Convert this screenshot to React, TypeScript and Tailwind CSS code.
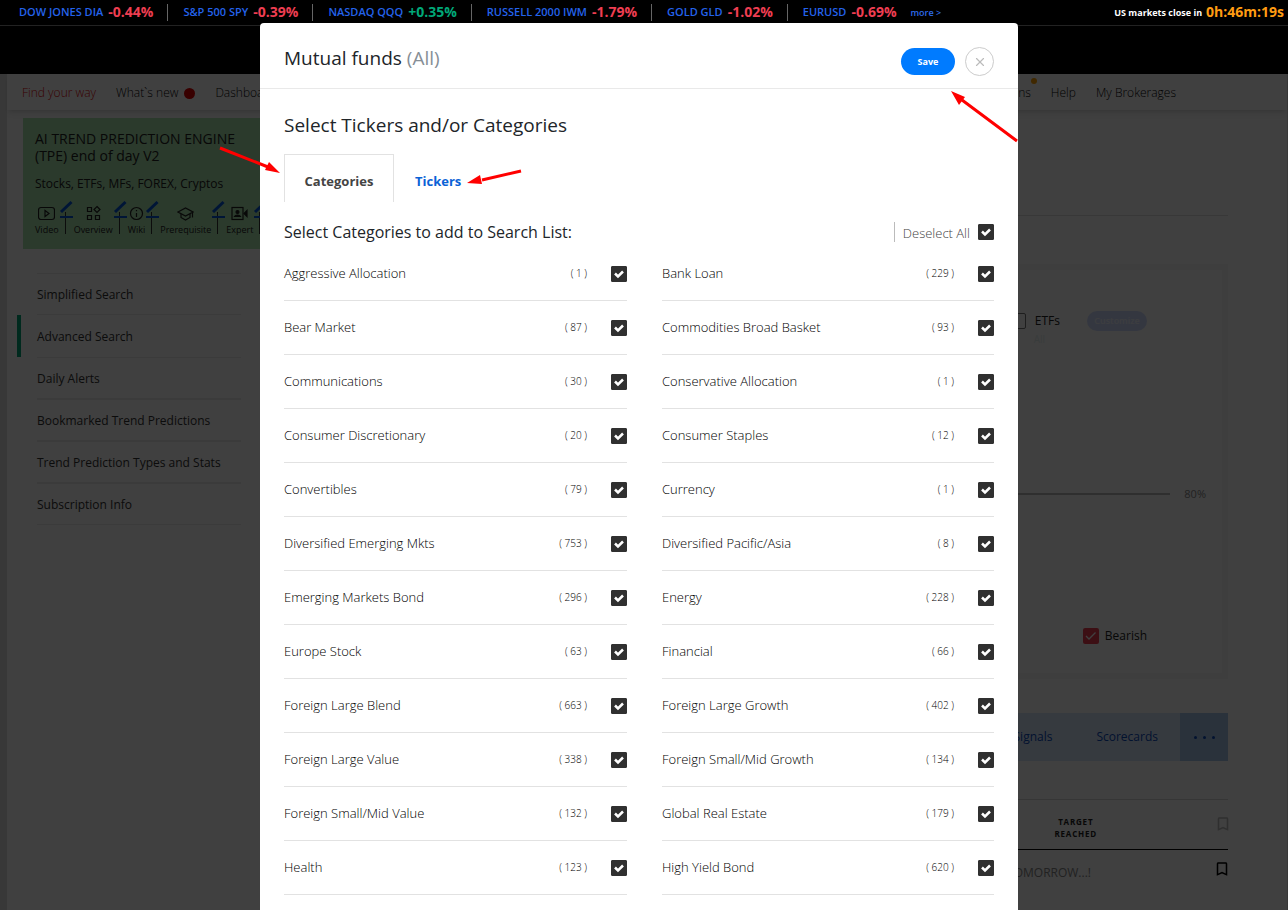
import { X } from 'lucide-react'
import { MdBookmarkBorder } from 'react-icons/md'

const quotes = [
  { name: 'DOW JONES DIA', change: '-0.44%' },
  { name: 'S&P 500 SPY', change: '-0.39%' },
  { name: 'NASDAQ QQQ', change: '+0.35%' },
  { name: 'RUSSELL 2000 IWM', change: '-1.79%' },
  { name: 'GOLD GLD', change: '-1.02%' },
  { name: 'EURUSD', change: '-0.69%' },
]

const categories = [
  [
    { name: 'Aggressive Allocation', count: 1 },
    { name: 'Bear Market', count: 87 },
    { name: 'Communications', count: 30 },
    { name: 'Consumer Discretionary', count: 20 },
    { name: 'Convertibles', count: 79 },
    { name: 'Diversified Emerging Mkts', count: 753 },
    { name: 'Emerging Markets Bond', count: 296 },
    { name: 'Europe Stock', count: 63 },
    { name: 'Foreign Large Blend', count: 663 },
    { name: 'Foreign Large Value', count: 338 },
    { name: 'Foreign Small/Mid Value', count: 132 },
    { name: 'Health', count: 123 },
  ],
  [
    { name: 'Bank Loan', count: 229 },
    { name: 'Commodities Broad Basket', count: 93 },
    { name: 'Conservative Allocation', count: 1 },
    { name: 'Consumer Staples', count: 12 },
    { name: 'Currency', count: 1 },
    { name: 'Diversified Pacific/Asia', count: 8 },
    { name: 'Energy', count: 228 },
    { name: 'Financial', count: 66 },
    { name: 'Foreign Large Growth', count: 402 },
    { name: 'Foreign Small/Mid Growth', count: 134 },
    { name: 'Global Real Estate', count: 179 },
    { name: 'High Yield Bond', count: 620 },
  ],
]

const menu = [
  'Simplified Search',
  'Advanced Search',
  'Daily Alerts',
  'Bookmarked Trend Predictions',
  'Trend Prediction Types and Stats',
  'Subscription Info',
]

const guides = [
  {
    label: 'Video',
    icon: (
      <>
        <rect x="0.5" y="2.5" width="16" height="12" rx="2.5" />
        <path d="M7 5.5v6l4-3z" />
      </>
    ),
  },
  {
    label: 'Overview',
    icon: (
      <>
        <path d="M2.5 2.5h4v4h-4zM2.5 10.5h4v4h-4zM10.5 10.5h4v4h-4z" />
        <path d="M12 1.5l3 3-3 3-3-3z" />
      </>
    ),
  },
  {
    label: 'Wiki',
    icon: (
      <>
        <circle cx="8.5" cy="8.5" r="6" />
        <path d="M8.5 8v4M8.5 5v1.2" />
      </>
    ),
  },
  {
    label: 'Prerequisite',
    icon: (
      <>
        <path d="M1 7l7.5-4L16 7l-7.5 4z" />
        <path d="M4 9v3.5l4.5 2.5 4.5-2.5V9M15.5 7.5v5" />
      </>
    ),
  },
  {
    label: 'Expert',
    icon: (
      <>
        <rect x="1" y="2.5" width="11" height="12" />
        <circle cx="6.5" cy="7" r="1.5" fill="currentColor" />
        <path d="M3.5 11.5c1-2 5-2 6 0z" fill="currentColor" />
        <path d="M16 5.5v6l-3-3z" fill="currentColor" />
      </>
    ),
  },
]

function TickerBar() {
  return (
    <div className="relative z-20 flex h-[25px] items-center bg-black pr-1 pl-1 whitespace-nowrap">
      {quotes.map((q) => (
        <a
          key={q.name}
          href="#"
          className="flex h-[17px] items-center gap-[5px] border-r border-[#666] pr-[14px] pl-[15px] text-[11px] font-semibold text-[#2463eb] last-of-type:border-0"
        >
          {q.name}
          <span
            className={`pb-px text-[14px] leading-4 font-bold ${q.change[0] === '+' ? 'text-[#00a878]' : 'text-[#ef3e52]'}`}
          >
            {q.change}
          </span>
        </a>
      ))}
      <button className="text-[9px] font-semibold text-[#2e6bea]">more &gt;</button>
      <div className="ml-auto flex items-center gap-1 text-[9px] font-bold text-white">
        US markets close in
        <span className="pb-px text-[14px] leading-4 text-[#ff9c12]">0h:46m:19s</span>
      </div>
    </div>
  )
}

function NavBar() {
  return (
    <nav className="flex h-9 shrink-0 items-center bg-white pt-[2px] text-[12px] font-light text-black shadow-md">
      <div className="flex flex-1 items-center gap-5 pl-[15px]">
        <a href="#" className="text-[#e00000]">Find your way</a>
        <a href="#" className="flex items-center gap-[6px]">
          What`s new
          <span className="size-[11px] rounded-full bg-[#e00000]" />
        </a>
        <a href="#">Dashboard</a>
      </div>
      <div className="flex items-center gap-5 pr-[111px]">
        <a href="#" className="relative">
          Options
          <span className="absolute -top-[6px] -right-[6px] size-[6px] rounded-full bg-[#ffa000]" />
        </a>
        <a href="#">Help</a>
        <a href="#">My Brokerages</a>
      </div>
    </nav>
  )
}

function GuideLinks() {
  return (
    <div className="mt-2 flex">
      {guides.map((g) => (
        <div key={g.label} className="flex items-end">
          <a href="#" className="flex flex-col items-center text-[9px] leading-4">
            <svg className="size-[17px]" viewBox="0 0 17 17" fill="none" stroke="currentColor" strokeWidth="1.2">
              {g.icon}
            </svg>
            {g.label}
          </a>
          <svg className="-mx-[3px] h-[38px] w-[21px]" viewBox="0 0 21 38" fill="none">
            <path d="M9.5 12v22" stroke="#333" />
            <path d="M5 12L15.5 2" stroke="#0054d8" strokeWidth="3" />
            <path d="M4 17h13" stroke="#0054d8" strokeWidth="2" />
          </svg>
        </div>
      ))}
    </div>
  )
}

function Sidebar() {
  return (
    <aside className="w-[265px] shrink-0">
      <div className="ml-4 h-[131px] overflow-hidden bg-[#ace5b0] px-3 pt-3 whitespace-nowrap text-[#222]">
        <h2 className="text-[14px] leading-[17px]">
          AI TREND PREDICTION ENGINE
          <br />
          (TPE) end of day V2
        </h2>
        <p className="mt-3 text-[12px] leading-4">Stocks, ETFs, MFs, FOREX, Cryptos</p>
        <GuideLinks />
      </div>
      <ul className="mt-6 mr-[31px] ml-[10px] text-[12px] text-[#333]">
        {menu.map((item) => (
          <li key={item}>
            {item === 'Advanced Search' ? (
              <a href="#" className="flex h-[42px] items-center border-l-4 border-[#00a878] bg-white pt-[2px] pl-4">
                {item}
              </a>
            ) : (
              <a
                href="#"
                className="ml-5 flex h-[42px] items-center border-b border-[#ececec] pt-[2px] first-of-type:border-t"
              >
                {item}
              </a>
            )}
          </li>
        ))}
      </ul>
    </aside>
  )
}

function SearchPanel() {
  return (
    <main className="mr-[59px] flex-1 pt-[97px] text-[12px] text-[#222]">
      <div className="border-t border-[#ddd]" />
      <section className="mt-12 h-[415px] border-[6px] border-[#f5f5f5] bg-white pt-[41px]">
        <div className="flex h-5 items-center justify-end pr-[75px]">
          <input type="checkbox" id="etfs" className="size-4 appearance-none rounded-xs border border-[#777]" />
          <label htmlFor="etfs" className="ml-[9px]">ETFs</label>
          <button className="ml-[27px] h-5 w-[60px] rounded-full bg-[#d0dcff] text-[9px] font-semibold text-[#f0f4ff]">
            Customize
          </button>
        </div>
        <p className="pr-[177px] text-right text-[10px] leading-4 text-[#e3eeee]">All</p>
        <div className="mt-[137px] flex h-5 items-center gap-[14px] pr-4 text-[11px] text-[#888]">
          <div className="h-[2px] flex-1 bg-[#bbb]" />
          80%
        </div>
        <div className="mt-[122px] flex h-5 items-center justify-end gap-[6px] pr-[75px]">
          <span className="relative flex">
            <input
              type="checkbox"
              id="bearish"
              defaultChecked
              className="size-4 appearance-none rounded-xs bg-[#ef3e52]"
            />
            <svg className="pointer-events-none absolute size-4" viewBox="0 0 16 16" fill="none" stroke="white">
              <path d="M3 8l3 3 6.5-6.5" strokeWidth="1.3" />
            </svg>
          </span>
          <label htmlFor="bearish">Bearish</label>
        </div>
      </section>
      <div className="mt-[34px] flex h-12 items-center justify-end bg-[#d8e6fb] text-[#0a4bbd]">
        <a href="#">Signals</a>
        <a href="#" className="mr-[22px] ml-11">Scorecards</a>
        <button aria-label="More tabs" className="flex size-12 items-center justify-center gap-[6px] bg-[#a7c6ea]">
          <span className="size-[3px] rounded-full bg-[#0a4bbd]" />
          <span className="size-[3px] rounded-full bg-[#0a4bbd]" />
          <span className="size-[3px] rounded-full bg-[#0a4bbd]" />
        </button>
      </div>
      <div className="mt-[38px] flex h-[51px] items-center justify-end border-t border-b border-t-[#d5d5d5] border-b-black">
        <span className="pt-[6px] text-center text-[8px] leading-3 font-bold tracking-widest">
          TARGET
          <br />
          REACHED
        </span>
        <MdBookmarkBorder className="-mr-1 mb-[2px] ml-[117px] size-[18px] text-[#bbb]" />
      </div>
      <div className="flex h-[45px] items-center justify-end text-[#888]">
        TOMORROW...!
        <MdBookmarkBorder className="-mr-[3px] mb-2 ml-[122px] size-[18px] text-black" />
      </div>
    </main>
  )
}

function Check({ id }: { id: string }) {
  return (
    <span className="relative flex size-4 shrink-0">
      <input
        type="checkbox"
        id={id}
        defaultChecked
        className="peer size-4 appearance-none rounded-[1px] border border-[#303030] checked:bg-[#303030]"
      />
      <svg
        className="pointer-events-none absolute hidden size-4 peer-checked:block"
        viewBox="0 0 16 16"
        fill="none"
        stroke="white"
        strokeWidth="2.5"
      >
        <path d="M4 7.5l3 3 5-5" />
      </svg>
    </span>
  )
}

function CategoryColumn({ rows }: { rows: { name: string; count: number }[] }) {
  return (
    <ul>
      {rows.map((row) => (
        <li key={row.name} className="flex h-[54px] items-center border-b border-[#e2e2e2]">
          <label htmlFor={row.name} className="flex-1">{row.name}</label>
          <span className="mr-6 text-[10px]">( {row.count} )</span>
          <Check id={row.name} />
        </li>
      ))}
    </ul>
  )
}

function FundsDialog() {
  return (
    <div
      role="dialog"
      aria-label="Mutual funds"
      className="relative min-h-full w-[758px] rounded-t-[4px] bg-white text-[#212529]"
    >
      <header className="flex h-[66px] items-center border-b border-[#e9e9e9] px-6">
        <h1 className="flex-1 pt-[5px] text-[19px] leading-7">
          Mutual funds <span className="text-[#868e96]">(All)</span>
        </h1>
        <div className="flex items-center gap-[10px] pt-3">
          <button className="h-[27px] w-[54px] rounded-full bg-[#007bff] text-[9px] font-bold text-white">Save</button>
          <button
            aria-label="Close"
            className="flex size-[29px] items-center justify-center rounded-full border border-[#ccc] text-[#bbb]"
          >
            <X className="size-[14px]" />
          </button>
        </div>
      </header>
      <div className="px-6 pt-[22px]">
        <h2 className="text-[19px] leading-7">Select Tickers and/or Categories</h2>
        <div role="tablist" className="mt-[15px] flex h-12 text-[13px] font-bold">
          <button
            role="tab"
            aria-selected="true"
            className="w-[110px] border border-b-0 border-[#e2e2e2] pt-[6px] text-[#444]"
          >
            Categories
          </button>
          <button role="tab" aria-selected="false" className="px-[21px] pt-[7px] text-[#0b62d6]">Tickers</button>
        </div>
        <div className="flex h-[45px] items-center justify-between pt-[14px]">
          <h3 className="text-[16px] leading-6">Select Categories to add to Search List:</h3>
          <div className="flex items-center gap-2 border-l border-[#bbb] pl-2 text-[13px] leading-5 font-light text-[#444]">
            <label htmlFor="all" className="pt-[2px] leading-[18px]">Deselect All</label>
            <Check id="all" />
          </div>
        </div>
        <div className="grid grid-cols-[343fr_332fr] gap-[35px] text-[13px] font-light text-black">
          {categories.map((rows) => (
            <CategoryColumn key={rows[0].name} rows={rows} />
          ))}
        </div>
      </div>

      {/* Pointers to the tabs and the save button */}
      <svg className="pointer-events-none absolute top-0 left-0 h-[200px] w-full overflow-visible" fill="#f00">
        <path d="M-40 125L8 144M261 148L222 157M757 118L702 77" stroke="#f00" strokeWidth="3" />
        <path d="M20 150L9 139L5 147zM207 160L220 152L222 161zM691 68L705 74L699 82z" />
      </svg>
    </div>
  )
}

export default function App() {
  return (
    <div className="relative flex h-screen flex-col overflow-hidden bg-[#e0e0e0] font-['Open_Sans','Noto_Sans',sans-serif]">
      <TickerBar />
      <div className="h-[49px] shrink-0 border-t border-[#888] bg-black" />
      <div className="mr-px ml-[7px] flex flex-1 flex-col bg-[#fdfdfd]">
        <NavBar />
        <div className="flex pt-2">
          <Sidebar />
          <SearchPanel />
        </div>
      </div>
      <div className="absolute inset-0 z-10 bg-black/75" />
      <div className="absolute inset-0 z-30 flex justify-center overflow-y-auto pt-[23px] pr-[10px] [scrollbar-width:none]">
        <FundsDialog />
      </div>
    </div>
  )
}
